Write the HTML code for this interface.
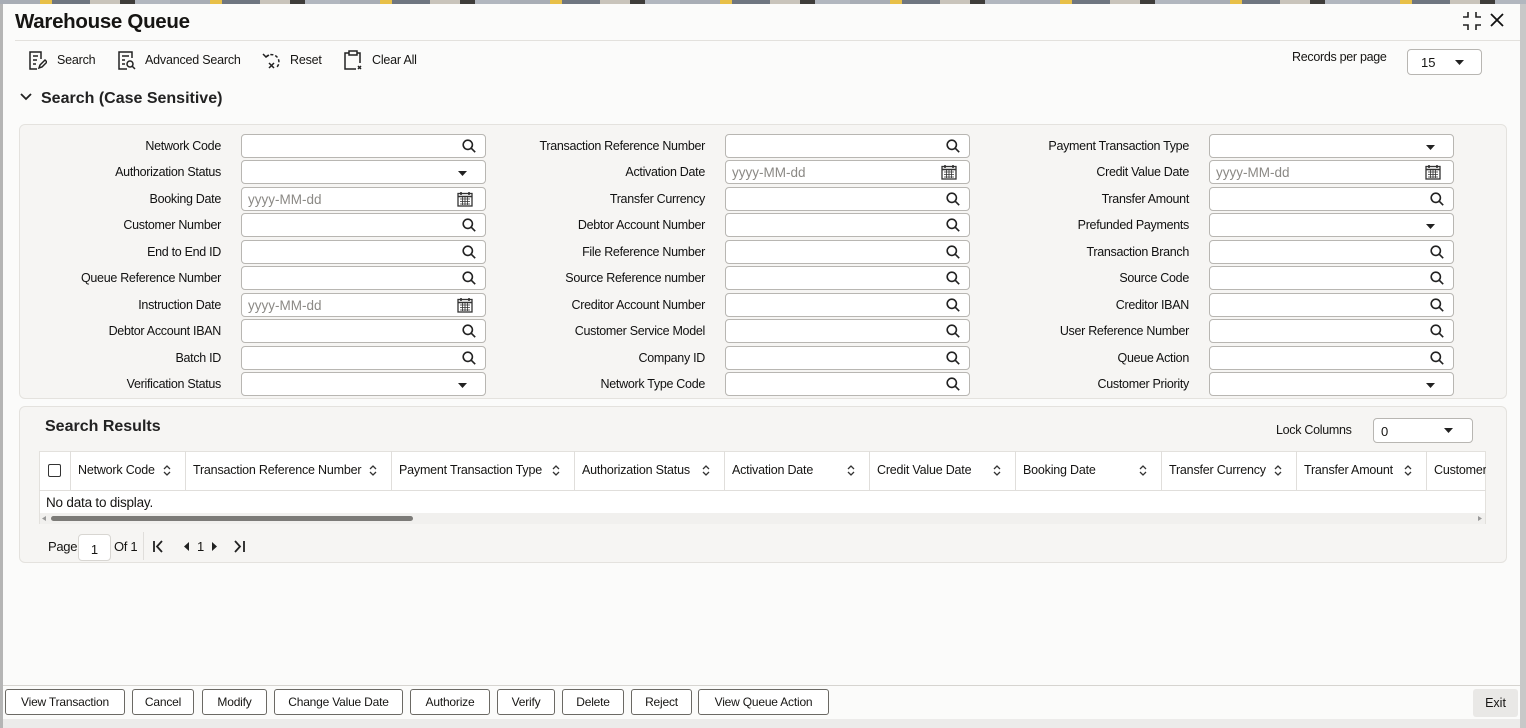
<!DOCTYPE html>
<html><head><meta charset="utf-8"><style>
*{box-sizing:border-box;margin:0;padding:0}
body{width:1526px;height:728px;overflow:hidden;background:#fbfbfa;font-family:"Liberation Sans",sans-serif;color:#161513;position:relative;font-size:13px}
.abs{position:absolute}
.top{left:0;top:0;width:1526px;height:4px;background:repeating-linear-gradient(90deg,#a8adb5 0 40px,#e8c048 40px 52px,#6f7680 52px 90px,#c9c4bb 90px 120px,#3f3d3a 120px 135px,#b2b7bf 135px 170px)}
.lb{left:0;top:4px;width:3px;height:724px;background:#b5b5b5}
.rb{left:1520px;top:4px;width:6px;height:724px;background:#c8c8c8}
.panel{background:#f6f5f3;border:1px solid #e4e2de;border-radius:6px}
.lbl{font-size:12.5px;text-align:right;width:220px;letter-spacing:-0.3px;color:#111}
.inp{height:24px;border:1px solid #b8b6b2;border-radius:4px;background:#fff;width:245px}
.ph{font-size:13.5px;color:#8b8985;position:absolute;left:6px;top:4px}
.ic{position:absolute;right:9px;top:4px}
.tb{font-size:12.5px;letter-spacing:-0.2px}
.th{top:451px;height:39px;border-right:1px solid #e0dedb;font-size:12.5px;letter-spacing:-0.2px;padding:12px 0 0 7px;white-space:nowrap;overflow:hidden}
.btn{top:689px;height:26px;border:1px solid #6b6964;border-radius:3px;background:#fff;font-size:12px;letter-spacing:-0.2px;text-align:center;line-height:24px}
</style></head><body>
<div class="abs top"></div><div class="abs lb"></div><div class="abs rb"></div>
<div class="abs" style="left:15px;top:10px;font-size:20.5px;font-weight:bold;letter-spacing:-0.3px">Warehouse Queue</div>
<svg class="abs" style="left:1461px;top:11px" width="22" height="20" viewBox="0 0 22 20" fill="none" stroke="#222" stroke-width="1.6"><path d="M7 1v5H2M15 1v5h5M7 19v-5H2M15 19v-5h5"/></svg>
<svg class="abs" style="left:1490px;top:13px" width="14" height="14" viewBox="0 0 14 14" stroke="#111" stroke-width="1.8"><path d="M1 1l12 12M13 1L1 13"/></svg>
<div class="abs" style="left:15px;top:40px;width:1505px;height:1px;background:#e3e1dd"></div>
<svg class="abs" style="left:29px;top:51px" width="18" height="19" viewBox="0 0 18 19" fill="none" stroke="#222" stroke-width="1.5"><path d="M12 8V1H1v17h7M4 5h5M4 9h4M4 13h3"/><path d="M10 17l1-3 5-5 2 2-5 5z"/></svg>
<div class="abs tb" style="left:57px;top:53px">Search</div>
<svg class="abs" style="left:118px;top:51px" width="18" height="19" viewBox="0 0 18 19" fill="none" stroke="#222" stroke-width="1.5"><path d="M14 7V1H1v17h8M4 5h7M4 9h3M4 13h3"/><circle cx="12" cy="13" r="3"/><path d="M14 15l3 3"/></svg>
<div class="abs tb" style="left:145px;top:53px">Advanced Search</div>
<svg class="abs" style="left:262px;top:51px" width="20" height="19" viewBox="0 0 20 19" fill="none" stroke="#222" stroke-width="1.5"><path d="M4 6a7 7 0 1 1 11 10" stroke-dasharray="3 2"/><path d="M1 3l3 3 3-2"/><path d="M7 12l5 5M12 12l-5 5"/></svg>
<div class="abs tb" style="left:290px;top:53px">Reset</div>
<svg class="abs" style="left:344px;top:50px" width="18" height="20" viewBox="0 0 18 20" fill="none" stroke="#222" stroke-width="1.5"><path d="M5 3H1v16h11M13 3h3v10"/><rect x="5" y="1" width="8" height="4"/><path d="M14 16l3 3M17 16l-3 3"/></svg>
<div class="abs tb" style="left:372px;top:53px">Clear All</div>
<div class="abs" style="left:1292px;top:50px;font-size:12.5px;letter-spacing:-0.3px">Records per page</div>
<div class="abs inp" style="left:1407px;top:49px;width:75px;height:26px"><span style="position:absolute;left:13px;top:5px;font-size:13px">15</span><svg class="ic" style="right:17px;top:10px" width="9" height="5"><path d="M0 0h9L4.5 5z" fill="#222"/></svg></div>
<svg class="abs" style="left:20px;top:93px" width="12" height="8" viewBox="0 0 12 8" fill="none" stroke="#222" stroke-width="1.8"><path d="M1 1l5 5 5-5"/></svg>
<div class="abs" style="left:41px;top:90px;font-size:16px;font-weight:bold;color:#222">Search (Case Sensitive)</div>
<div class="abs panel" style="left:19px;top:124px;width:1488px;height:275px"></div>
<div id="form"></div>
<div class="abs panel" style="left:19px;top:406px;width:1488px;height:157px"></div>
<div class="abs" style="left:45px;top:418px;font-size:16px;font-weight:bold;color:#222">Search Results</div>
<div class="abs" style="left:1276px;top:423px;font-size:12.5px;letter-spacing:-0.3px">Lock Columns</div>
<div class="abs inp" style="left:1373px;top:418px;width:100px;height:25px"><span style="position:absolute;left:7px;top:5px;font-size:13px">0</span><svg class="ic" style="right:19px;top:9px" width="9" height="5"><path d="M0 0h9L4.5 5z" fill="#222"/></svg></div>
<div class="abs" style="left:39px;top:451px;width:1447px;height:73px;background:#fff;border:1px solid #e3e1dd"></div>
<div class="abs" style="left:39px;top:490px;width:1447px;height:1px;background:#e0dedb"></div>
<div class="abs" style="left:48px;top:464px;width:13px;height:13px;border:1.5px solid #333;border-radius:2px"></div>
<div id="th"></div>
<div class="abs" style="left:46px;top:495px;font-size:13.5px;letter-spacing:-0.2px">No data to display.</div>
<div class="abs" style="left:40px;top:513px;width:1445px;height:11px;background:#f1f0ee"></div>
<div class="abs" style="left:51px;top:516px;width:362px;height:5px;background:#7c7b78;border-radius:3px"></div>
<svg class="abs" style="left:42px;top:516px" width="4" height="5"><path d="M4 0v5L0 2.5z" fill="#999"/></svg>
<svg class="abs" style="left:1478px;top:516px" width="4" height="5"><path d="M0 0v5l4-2.5z" fill="#999"/></svg>
<div class="abs" style="left:48px;top:539px;font-size:13px;letter-spacing:-0.3px">Page</div>
<div class="abs" style="left:78px;top:534px;width:33px;height:27px;border:1px solid #d8d6d2;border-radius:4px;background:#fff;text-align:center;padding-top:7px;font-size:13px">1</div>
<div class="abs" style="left:114px;top:539px;font-size:13px;letter-spacing:-0.3px">Of 1</div>
<div class="abs" style="left:143px;top:532px;width:1px;height:28px;background:#e0dedb"></div>
<svg class="abs" style="left:152px;top:540px" width="100" height="13" fill="none" stroke="#222" stroke-width="1.8"><path d="M2 1v11M10 1L5 6.5 10 12"/><path d="M37 2v9l-5-4.5z" fill="#222" stroke="none"/><path d="M60 2v9l5-4.5z" fill="#222" stroke="none"/><path d="M83 1l5 5.5-5 5.5M92 1v11"/></svg>
<div class="abs" style="left:197px;top:539px;font-size:13px">1</div>
<div class="abs" style="left:3px;top:685px;width:1517px;height:1px;background:#d6d4d0"></div>
<div id="btns"></div>
<div class="abs" style="left:1473px;top:689px;width:45px;height:28px;background:#e9e8e6;border-radius:3px;font-size:12.5px;text-align:center;line-height:28px">Exit</div>
<div class="abs" style="left:3px;top:719px;width:1517px;height:9px;background:#ecebea"></div>
<script>
const S='<svg width="14" height="14" viewBox="0 0 14 14" fill="none" stroke="#222" stroke-width="1.6"><circle cx="5.8" cy="5.8" r="4.6"/><path d="M9.2 9.2l4 4"/></svg>';
const D='<svg width="9" height="5" style="display:block;margin:4px 4px 0 0"><path d="M0 0h9L4.5 5z" fill="#222"/></svg>';
const C='<svg width="16" height="16" viewBox="0 0 16 16" fill="none" stroke="#333" stroke-width="1.3"><rect x="1" y="2.5" width="14" height="12.5"/><path d="M1 5.5h14M4 1v3M12 1v3" stroke-width="1.6"/><path d="M3 8h10M3 10.5h10M3 13h10M5.5 6v8M8 6v8M10.5 6v8" stroke-width="0.8"/></svg>';
const cols=[[221,241],[705,725],[1189,1209]];
const data=[
[["Network Code","s"],["Transaction Reference Number","s"],["Payment Transaction Type","d"]],
[["Authorization Status","d"],["Activation Date","c"],["Credit Value Date","c"]],
[["Booking Date","c"],["Transfer Currency","s"],["Transfer Amount","s"]],
[["Customer Number","s"],["Debtor Account Number","s"],["Prefunded Payments","d"]],
[["End to End ID","s"],["File Reference Number","s"],["Transaction Branch","s"]],
[["Queue Reference Number","s"],["Source Reference number","s"],["Source Code","s"]],
[["Instruction Date","c"],["Creditor Account Number","s"],["Creditor IBAN","s"]],
[["Debtor Account IBAN","s"],["Customer Service Model","s"],["User Reference Number","s"]],
[["Batch ID","s"],["Company ID","s"],["Queue Action","s"]],
[["Verification Status","d"],["Network Type Code","s"],["Customer Priority","d"]]];
let h='';
data.forEach((r,i)=>{const y=Math.round(134+i*26.45);
r.forEach((f,j)=>{const [le,ix]=cols[j];
h+=`<div class="abs lbl" style="left:${le-220}px;top:${y+5}px">${f[0]}</div>`;
let ic=f[1]=='s'?S:f[1]=='d'?D:C;
h+=`<div class="abs inp" style="left:${ix}px;top:${y}px">${f[1]=='c'?'<span class="ph">yyyy-MM-dd</span>':''}<span class="ic" style="${f[1]=='c'?'right:12px;top:3px':''}${f[1]=='d'?'top:6px;right:14px':''}">${ic}</span></div>`;});});
document.getElementById('form').innerHTML=h;
const cb=[71,186,392,575,725,870,1016,1162,1297,1427,1486];
const tn=["Network Code","Transaction Reference Number","Payment Transaction Type","Authorization Status","Activation Date","Credit Value Date","Booking Date","Transfer Currency","Transfer Amount","Customer"];
const sort='<svg width="8" height="11" viewBox="0 0 8 11" fill="none" stroke="#333" stroke-width="1.3" style="position:absolute;right:14px;top:14px"><path d="M1 4l3-3 3 3M1 7l3 3 3-3"/></svg>';
let t='<div class="abs" style="left:70px;top:451px;width:1px;height:39px;background:#e0dedb"></div>';
for(let i=0;i<10;i++){t+=`<div class="abs th" style="left:${cb[i]}px;width:${cb[i+1]-cb[i]}px;${i==9?'border-right:none':''}">${tn[i]}${i<9?sort:''}</div>`;}
document.getElementById('th').innerHTML=t;
const b=[["View Transaction",5,120],["Cancel",132,62],["Modify",202,65],["Change Value Date",274,129],["Authorize",410,80],["Verify",497,58],["Delete",562,62],["Reject",631,61],["View Queue Action",698,131]];
document.getElementById('btns').innerHTML=b.map(x=>`<div class="abs btn" style="left:${x[1]}px;width:${x[2]}px">${x[0]}</div>`).join('');
</script>
</body></html>
